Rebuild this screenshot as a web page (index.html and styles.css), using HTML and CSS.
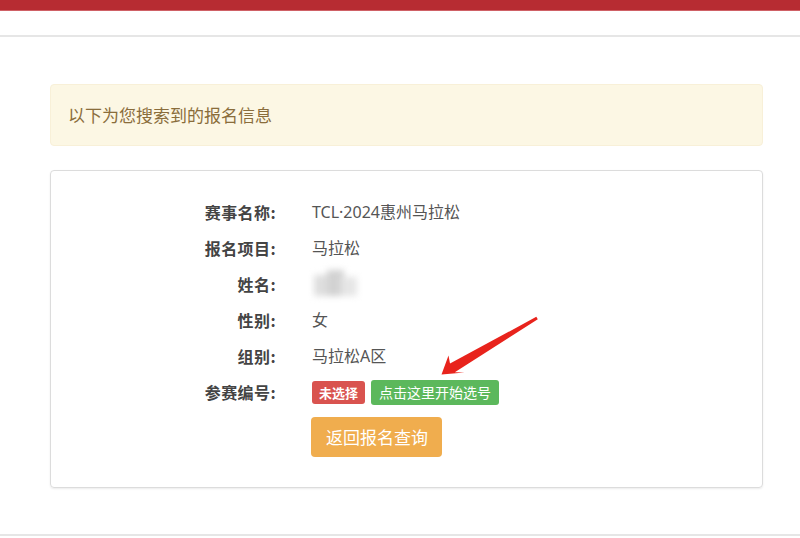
FILE: index.html
```html
<!DOCTYPE html>
<html lang="zh-CN">
<head>
<meta charset="utf-8">
<title>报名信息</title>
<link rel="stylesheet" href="styles.css">
</head>
<body>
<div class="topbar"></div>
<div class="subbar"></div>
<main class="container">
  <div class="alert">以下为您搜索到的报名信息</div>
  <section class="card">
    <div class="form">
      <div class="label">赛事名称:</div>
      <div class="value">TCL·2024惠州马拉松</div>
      <div class="label">报名项目:</div>
      <div class="value">马拉松</div>
      <div class="label">姓名:</div>
      <div class="value"><span class="blur"><span class="b1"></span><span class="b2"></span><span class="b3"></span></span></div>
      <div class="label">性别:</div>
      <div class="value">女</div>
      <div class="label">组别:</div>
      <div class="value">马拉松A区</div>
      <div class="label">参赛编号:</div>
      <div class="value actions"><span class="badge">未选择</span><a class="btn-green">点击这里开始选号</a></div>
      <div></div>
      <div class="value back"><a class="btn-orange">返回报名查询</a></div>
    </div>
  </section>
</main>
<div class="footer-line"></div>
<svg class="arrow" width="800" height="538" viewBox="0 0 800 538">
  <polygon points="441.5,374.5 448.5,355.5 450,363.6 536.3,316.8 537.8,319.2 454.8,372.2 464.5,372.5" fill="#e8231c"/>
</svg>
</body>
</html>
```
FILE: styles.css
```css
html, body {
  margin: 0;
  padding: 0;
  background: #fff;
  font-family: "Noto Sans CJK SC", "Noto Sans", sans-serif;
  overflow: hidden;
}
body {
  position: relative;
  width: 800px;
  height: 538px;
}
.topbar {
  height: 10px;
  background: #b72c32;
  border-bottom: 1px solid #cf6166;
}
.subbar {
  height: 24px;
  border-bottom: 2px solid #e6e6e6;
}
.container {
  padding-left: 50px;
  width: 713px;
}
.alert {
  margin-top: 47px;
  height: 60px;
  line-height: 59px;
  padding: 0 17px;
  background: #fcf7e4;
  border: 1px solid #f8f0d8;
  border-radius: 4px;
  color: #8a6d3b;
  font-size: 17px;
}
.card {
  margin-top: 24px;
  height: 293px;
  border: 1px solid #dcdcdc;
  border-radius: 4px;
  box-shadow: 0 1px 2px rgba(0,0,0,0.08);
  padding-top: 23px;
}
.form {
  display: grid;
  grid-template-columns: 226px 1fr;
  column-gap: 35px;
  grid-auto-rows: 36px;
}
.label {
  text-align: right;
  font-weight: bold;
  color: #444;
  font-size: 16px;
  line-height: 36px;
  letter-spacing: 0.4px;
  padding-right: 1px;
}
.value {
  font-family: "Noto Sans", "Noto Sans CJK SC", sans-serif;
  color: #555;
  font-size: 16px;
  line-height: 36px;
}
.blur {
  display: inline-block;
  position: relative;
  width: 46px;
  height: 32px;
  vertical-align: middle;
  filter: blur(3px);
  margin-top: -3px;
}
.blur span {
  position: absolute;
}
.b1 { left: 2px; top: 7px; width: 16px; height: 21px; background: #dedede; }
.b2 { left: 15px; top: 2px; width: 17px; height: 26px; background: #d2d2d2; }
.b3 { left: 29px; top: 9px; width: 16px; height: 19px; background: #e6e6e6; }
.actions {
  display: flex;
  align-items: center;
  gap: 6px;
  font-family: "Noto Sans CJK SC", sans-serif;
}
.badge {
  display: inline-block;
  height: 23px;
  line-height: 23px;
  padding: 0 7px;
  background: #d9534f;
  color: #fff;
  font-size: 13px;
  font-weight: bold;
  border-radius: 3px;
}
.btn-green {
  display: inline-block;
  height: 25px;
  line-height: 25px;
  padding: 0 8px;
  background: #5cb85c;
  color: #fff;
  font-size: 14px;
  border-radius: 3px;
}
.back {
  line-height: normal;
  padding-top: 7px;
  font-family: "Noto Sans CJK SC", sans-serif;
}
.btn-orange {
  display: inline-block;
  height: 40px;
  line-height: 40px;
  padding: 0 14px 0 15px;
  margin-left: -1px;
  background: #f0ad4e;
  color: #fff;
  font-size: 17px;
  border-radius: 4px;
}
.footer-line {
  margin-top: 46px;
  border-top: 2px solid #e6e6e6;
}
.arrow {
  position: absolute;
  left: 0;
  top: 0;
  pointer-events: none;
}
```
